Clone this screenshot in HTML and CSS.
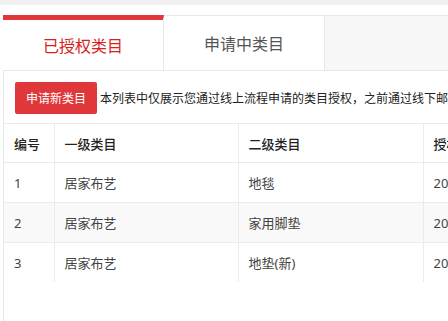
FILE: index.html
```html
<!DOCTYPE html>
<html lang="zh">
<head>
<meta charset="utf-8">
<link rel="stylesheet" href="styles.css">
</head>
<body>
<div class="topbar"></div>
<div class="page">
  <div class="tabs">
    <div class="tab active">已授权类目</div>
    <div class="tab">申请中类目</div>
  </div>
  <div class="panel">
    <div class="toolbar">
      <button class="btn">申请新类目</button>
      <span class="note">本列表中仅展示您通过线上流程申请的类目授权，之前通过线下邮件申请的类目授权请联系您的对接人员查询</span>
    </div>
    <table class="grid">
      <colgroup>
        <col class="c1"><col class="c2"><col class="c3"><col class="c4">
      </colgroup>
      <thead>
        <tr><th>编号</th><th>一级类目</th><th>二级类目</th><th>授权时间</th></tr>
      </thead>
      <tbody>
        <tr><td>1</td><td>居家布艺</td><td>地毯</td><td>2019-03-12 10:20:11</td></tr>
        <tr class="alt"><td>2</td><td>居家布艺</td><td>家用脚垫</td><td>2019-03-12 10:20:11</td></tr>
        <tr><td>3</td><td>居家布艺</td><td>地垫(新)</td><td>2019-03-12 10:20:11</td></tr>
      </tbody>
    </table>
  </div>
</div>
</body>
</html>
```
FILE: styles.css
```css
html, body {
  margin: 0;
  padding: 0;
  background: #fff;
  overflow: hidden;
  font-family: "Noto Sans", "Noto Sans CJK SC", sans-serif;
}
.topbar {
  height: 5px;
  background: #f0f0f0;
}
.page {
  padding: 10px 0 0 3px;
  width: 1200px;
}
.tabs {
  display: flex;
  height: 54px;
  background: #f7f7f7;
  border-top: 1px solid #e8e8e8;
}
.tab {
  width: 160px;
  border-right: 1px solid #e8e8e8;
  background: #fff;
  display: flex;
  align-items: center;
  justify-content: center;
  font-size: 16px;
  color: #555;
}
.tab.active {
  margin-top: -1px;
  border-top: 5px solid #e0383a;
  color: #d8201c;
}
.panel {
  border-top: 1px solid #e8e8e8;
  border-left: 1px solid #e8e8e8;
  min-height: 260px;
}
.toolbar {
  display: flex;
  align-items: center;
  gap: 3px;
  padding: 11px 11px 9px;
}
.btn {
  height: 32px;
  padding: 0 11px;
  border: none;
  border-radius: 2px;
  background: #e0383a;
  color: #fff;
  font-family: inherit;
  font-size: 12px;
  flex: none;
}
.note {
  font-size: 12px;
  color: #222;
  white-space: nowrap;
}
.grid {
  border-collapse: collapse;
  table-layout: fixed;
  width: 700px;
  font-size: 13px;
}
.c1 { width: 50px; }
.c2 { width: 184px; }
.c3 { width: 185px; }
.c4 { width: 281px; }
.grid th, .grid td {
  text-align: left;
  padding: 0 10px;
  border-top: 1px solid #ebebeb;
  border-left: 1px solid #ebebeb;
  white-space: nowrap;
  overflow: hidden;
}
.grid th:first-child, .grid td:first-child {
  border-left: none;
}
.grid th {
  height: 38px;
  font-weight: 500;
  color: #222;
}
.grid td {
  height: 39px;
  color: #444;
}
.grid tr.alt td {
  background: #f9f9f9;
}
```
